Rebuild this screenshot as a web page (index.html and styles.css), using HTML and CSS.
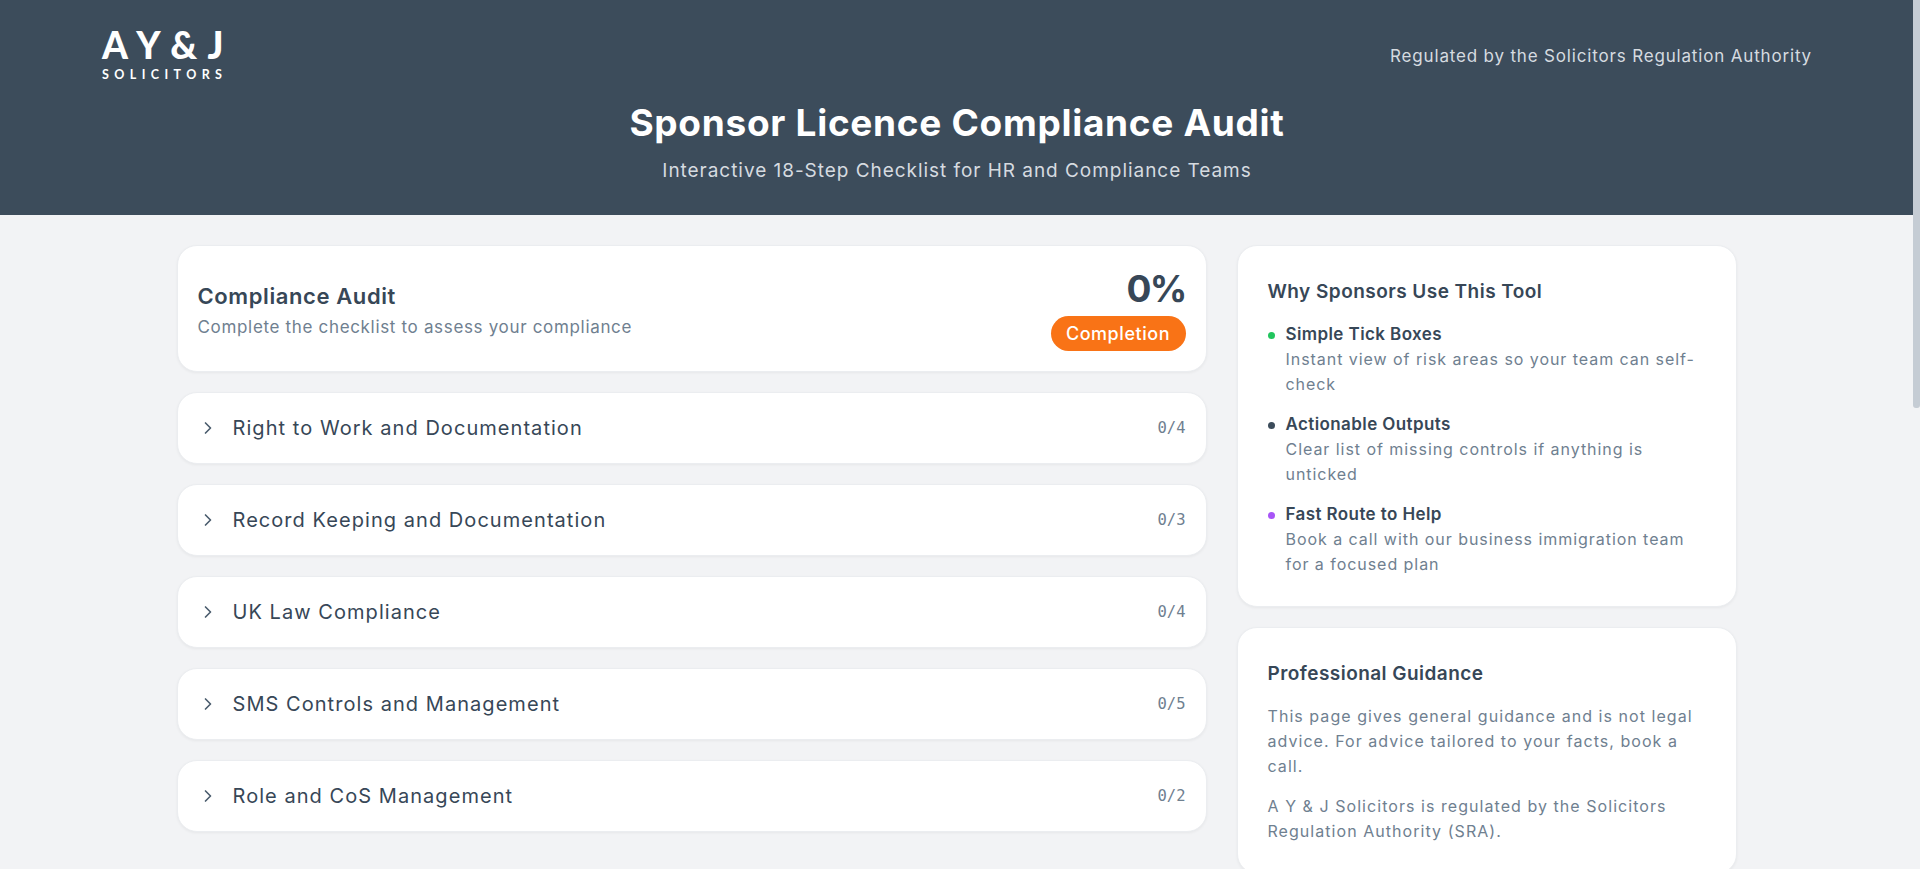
FILE: index.html
```html
<!DOCTYPE html>
<html lang="en">
<head>
<meta charset="utf-8">
<title>Sponsor Licence Compliance Audit</title>
<link rel="stylesheet" href="styles.css">
</head>
<body>
<div class="scroll-track"><div class="scroll-thumb"></div></div>
<header class="site-header">
  <div class="topbar">
    <div class="logo">
      <div class="logo-main">A Y &amp; J</div>
      <div class="logo-sub">SOLICITORS</div>
    </div>
    <div class="regulated">Regulated by the Solicitors Regulation Authority</div>
  </div>
  <div class="hero">
    <h1>Sponsor Licence Compliance Audit</h1>
    <p>Interactive 18-Step Checklist for HR and Compliance Teams</p>
  </div>
</header>
<main class="layout">
  <section class="audit">
    <div class="card summary">
      <div class="summary-text">
        <h2>Compliance Audit</h2>
        <p>Complete the checklist to assess your compliance</p>
      </div>
      <div class="score">
        <div class="percent">0%</div>
        <span class="badge">Completion</span>
      </div>
    </div>
    <div class="card row">
      <svg class="chev" viewBox="0 0 24 24"><path d="m9 18 6-6-6-6"/></svg>
      <span class="row-title">Right to Work and Documentation</span>
      <span class="count">0/4</span>
    </div>
    <div class="card row">
      <svg class="chev" viewBox="0 0 24 24"><path d="m9 18 6-6-6-6"/></svg>
      <span class="row-title">Record Keeping and Documentation</span>
      <span class="count">0/3</span>
    </div>
    <div class="card row">
      <svg class="chev" viewBox="0 0 24 24"><path d="m9 18 6-6-6-6"/></svg>
      <span class="row-title">UK Law Compliance</span>
      <span class="count">0/4</span>
    </div>
    <div class="card row">
      <svg class="chev" viewBox="0 0 24 24"><path d="m9 18 6-6-6-6"/></svg>
      <span class="row-title">SMS Controls and Management</span>
      <span class="count">0/5</span>
    </div>
    <div class="card row">
      <svg class="chev" viewBox="0 0 24 24"><path d="m9 18 6-6-6-6"/></svg>
      <span class="row-title">Role and CoS Management</span>
      <span class="count">0/2</span>
    </div>
  </section>
  <aside class="side">
    <div class="card panel">
      <h3>Why Sponsors Use This Tool</h3>
      <ul class="reasons">
        <li><i class="dot green"></i><div><strong>Simple Tick Boxes</strong><span>Instant view of risk areas so your team can self-check</span></div></li>
        <li><i class="dot slate"></i><div><strong>Actionable Outputs</strong><span>Clear list of missing controls if anything is unticked</span></div></li>
        <li><i class="dot purple"></i><div><strong>Fast Route to Help</strong><span>Book a call with our business immigration team for a focused plan</span></div></li>
      </ul>
    </div>
    <div class="card panel">
      <h3>Professional Guidance</h3>
      <p>This page gives general guidance and is not legal advice. For advice tailored to your facts, book a call.</p>
      <p>A Y &amp; J Solicitors is regulated by the Solicitors Regulation Authority (SRA).</p>
    </div>
  </aside>
</main>
</body>
</html>
```

FILE: styles.css
```css
* { box-sizing: border-box; }
body {
  margin: 0;
  min-height: 1851px;
  padding-right: 7px;
  background: #f2f3f5;
  color: #374757;
  font-family: Inter, "Noto Sans", sans-serif;
}
h1, h2, h3, p, ul { margin: 0; padding: 0; }

.scroll-track {
  position: fixed;
  top: 0;
  right: 0;
  bottom: 0;
  width: 7px;
  background: #f2f3f5;
}
.scroll-thumb { height: 408px; border-radius: 0 0 3px 3px; background: #c5ccd4; }

.site-header {
  height: 215px;
  padding: 26px 101px 0 102px;
  background: #3c4c5b;
  color: #fff;
}
.topbar { display: flex; justify-content: space-between; align-items: center; }
.logo { width: 122px; }
.logo-main {
  font-family: Lato, sans-serif;
  font-weight: 900;
  font-size: 37px;
  line-height: 38px;
  letter-spacing: 1.2px;
  white-space: nowrap;
}
.logo-sub {
  margin-top: 4px;
  font-family: Lato, sans-serif;
  font-weight: 700;
  font-size: 12.5px;
  line-height: 14px;
  letter-spacing: 5.4px;
  white-space: nowrap;
}
.regulated { padding-top: 4px; font-size: 17px; letter-spacing: 0.83px; color: #d6dbe0; }
.hero { text-align: center; margin-top: 18px; }
.hero h1 { font-size: 37px; line-height: 46px; font-weight: 700; letter-spacing: 0.7px; }
.hero p { margin-top: 11px; font-size: 19px; line-height: 28px; letter-spacing: 0.96px; color: #d6dbe0; }

.layout {
  width: 1560px;
  margin: 30px auto 0;
  display: grid;
  grid-template-columns: 1030px 500px;
  gap: 30px;
  align-items: start;
}
.audit, .side { display: flex; flex-direction: column; gap: 20px; }
.card {
  background: #fff;
  border: 1px solid #ebedf0;
  border-radius: 20px;
  box-shadow: 0 1px 3px rgba(0, 0, 0, 0.05);
}
.summary {
  height: 127px;
  padding: 0 20px;
  display: flex;
  justify-content: space-between;
  align-items: center;
}
.summary-text { margin-top: 3px; }
.summary h2 { font-size: 22px; line-height: 30px; font-weight: 600; letter-spacing: 0.6px; }
.summary p { margin-top: 4px; font-size: 17px; line-height: 24px; letter-spacing: 0.67px; color: #6f8090; }
.score { display: flex; flex-direction: column; align-items: flex-end; gap: 4px; }
.percent { font-size: 37px; line-height: 46px; font-weight: 700; letter-spacing: -1.8px; }
.badge {
  width: 135px;
  height: 35px;
  border-radius: 18px;
  background: #f97316;
  color: #fff;
  font-size: 18px;
  font-weight: 500;
  line-height: 35px;
  letter-spacing: 0.55px;
  text-align: center;
}
.row {
  height: 72px;
  padding: 0 20px;
  display: flex;
  align-items: center;
  gap: 15px;
}
.chev {
  width: 20px;
  height: 20px;
  fill: none;
  stroke: #4a5c6d;
  stroke-width: 2;
  stroke-linecap: round;
  stroke-linejoin: round;
}
.row-title { flex: 1; font-size: 20px; font-weight: 400; letter-spacing: 1.05px; }
.count { font-family: "DejaVu Sans Mono", monospace; font-size: 15.5px; color: #6f8090; }

.panel { padding: 31px 30px 29px; }
.panel h3 { font-size: 19px; line-height: 30px; font-weight: 600; letter-spacing: 0.46px; margin-bottom: 15px; }
.panel p { font-size: 16px; line-height: 25px; letter-spacing: 1.05px; color: #6f8090; }
.panel p + p { margin-top: 15px; }
.reasons { list-style: none; display: flex; flex-direction: column; gap: 15px; }
.reasons li { display: flex; gap: 11px; }
.dot { flex: none; width: 7px; height: 7px; margin-top: 10px; border-radius: 50%; }
.green { background: #22c55e; }
.slate { background: #3c4c5b; }
.purple { background: #a855f7; }
.reasons strong { display: block; font-size: 17px; line-height: 25px; font-weight: 600; letter-spacing: 0.4px; }
.reasons span { display: block; font-size: 16px; line-height: 25px; letter-spacing: 0.95px; color: #6f8090; }
```
